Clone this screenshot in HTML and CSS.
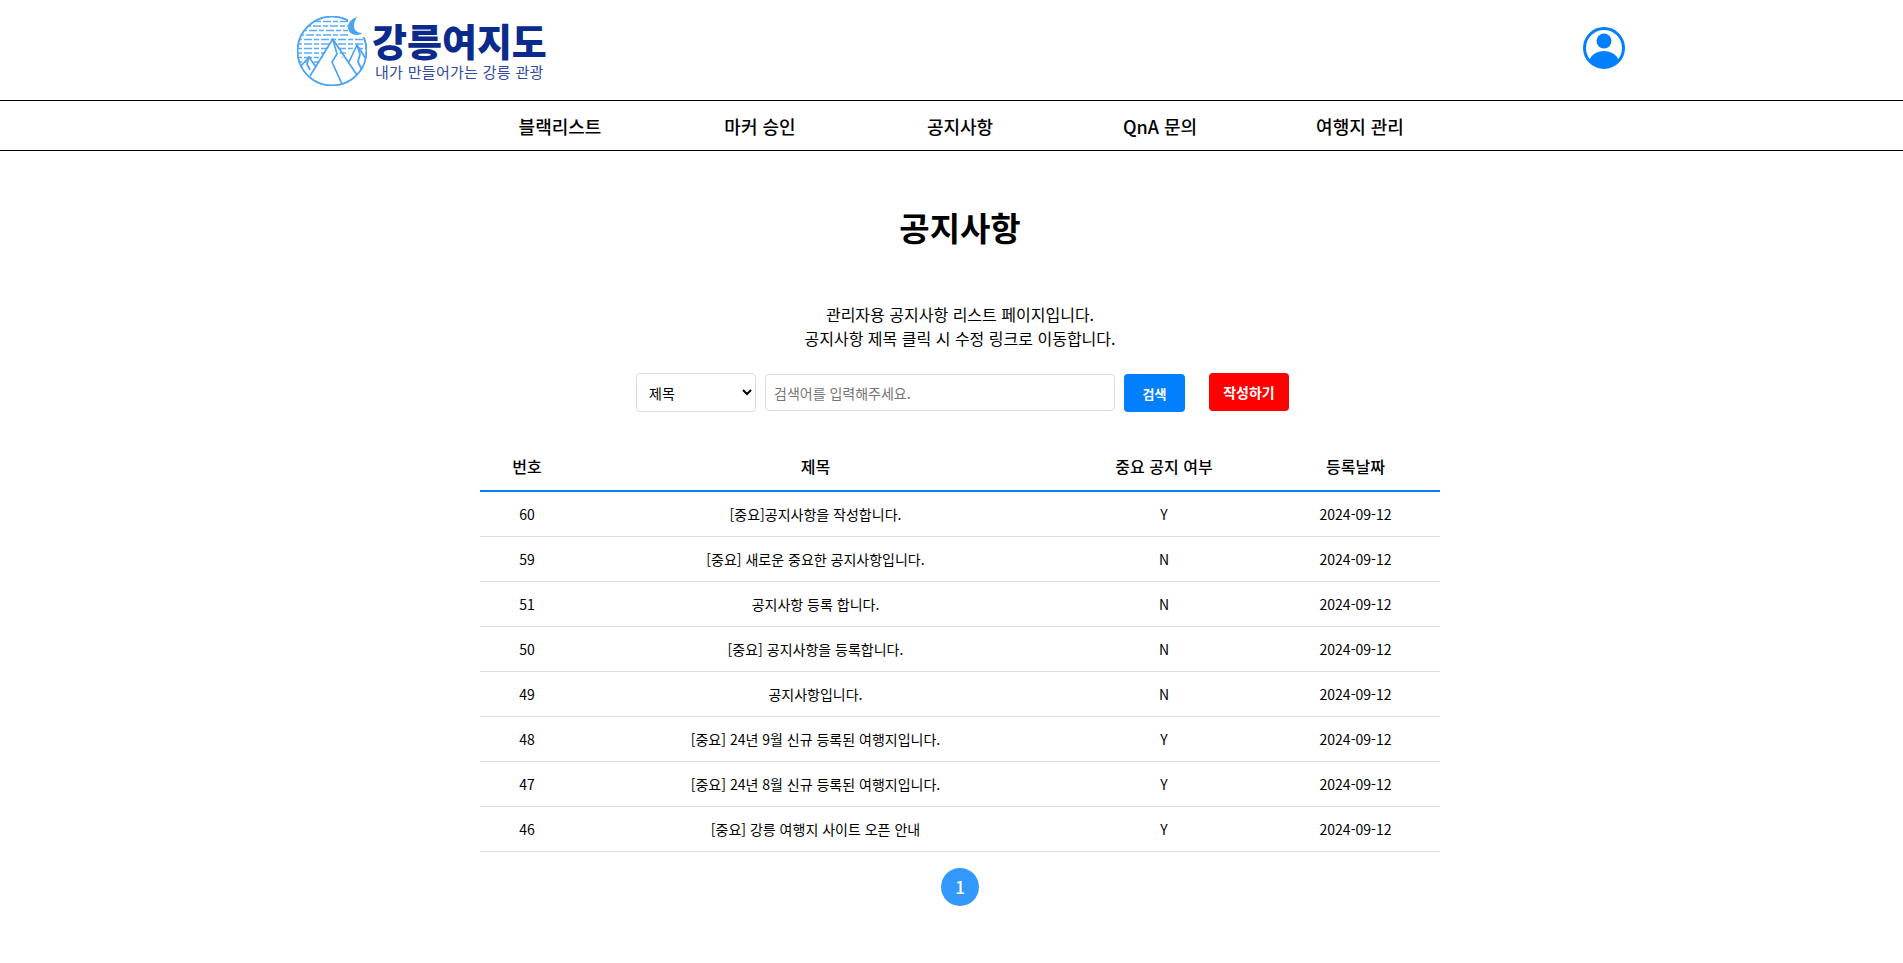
FILE: index.html
```html
<!DOCTYPE html>
<html lang="ko">
<head>
  <meta charset="UTF-8">
  <title>공지사항</title>
  <link rel="stylesheet" href="styles.css">
</head>
<body>
  <header class="top">
    <a class="logo" href="#">
      <svg class="logo-mark" width="70" height="70" viewBox="5 4 70 70" fill="none">
        <defs>
          <clipPath id="disc"><circle cx="40" cy="39" r="34"/></clipPath>
        </defs>
        <g clip-path="url(#disc)">
          <g stroke="#5aaef7" stroke-width="1.300" stroke-dasharray="5 2 8 2">
            <path d="M24 9.500H56M14 14H56M10 18.500H60M7 23H66M5 27.500H72M5 32H74M5 36.500H74M5 41H74M5 45.500H74M5 50H74"/>
          </g>
          <path d="M3 76 17 45 25 56 40.700 27 50 46 65 33 76 48V76z" fill="#fff"/>
        </g>
        <circle cx="40" cy="39" r="34.500" stroke="#4aa3f5" stroke-width="1.800"/>
        <path d="M56 3h16l2 22H56z" fill="#fff"/>
        <path d="M65 5c-6 2-9 6-9 10 0 5 4 8 9 8 2 0 4-1 5-2-5 0-8-3-8-7 0-3 1-6 3-9z" fill="#4aa3f5"/>
        <g stroke="#4aa3f5" stroke-width="1.700" stroke-linejoin="round">
          <path d="M18 64 40.700 27 65 63"/>
          <path d="M40.700 27 45 42 40 50 50 72"/>
          <path d="M57 50 65 33 74 47"/>
          <path d="M65 33 68 42 66 50 70 58"/>
          <path d="M9 54 17 45 24 55"/>
          <path d="M17 45 15 52 18 58"/>
        </g>
      </svg>
      <span class="logo-text">
        <strong>강릉여지도</strong>
        <small>내가 만들어가는 강릉 관광</small>
      </span>
    </a>
    <a class="user" href="#">
      <svg width="42" height="42" viewBox="0 0 42 42">
        <circle cx="21" cy="21" r="19.500" fill="#fff" stroke="#0080ff" stroke-width="3"/>
        <circle cx="21" cy="14" r="7.500" fill="#0080ff"/>
        <path d="M6.500 33c2-5.500 7.500-9 14.500-9s12.500 3.500 14.500 9c-3.500 4.500-8.500 7-14.500 7s-11-2.500-14.500-7z" fill="#0080ff"/>
      </svg>
    </a>
  </header>

  <nav class="menu">
    <a href="#">블랙리스트</a>
    <a href="#">마커 승인</a>
    <a href="#">공지사항</a>
    <a href="#">QnA 문의</a>
    <a href="#">여행지 관리</a>
  </nav>

  <main class="content">
    <h1>공지사항</h1>
    <p class="desc">관리자용 공지사항 리스트 페이지입니다.<br>공지사항 제목 클릭 시 수정 링크로 이동합니다.</p>

    <form class="search">
      <select>
        <option>제목</option>
      </select>
      <input type="text" placeholder="검색어를 입력해주세요.">
      <button type="button" class="btn-search">검색</button>
      <button type="button" class="btn-write">작성하기</button>
    </form>

    <table>
      <thead>
        <tr>
          <th class="c-no">번호</th>
          <th class="c-title">제목</th>
          <th class="c-yn">중요 공지 여부</th>
          <th class="c-date">등록날짜</th>
        </tr>
      </thead>
      <tbody>
        <tr><td>60</td><td>[중요]공지사항을 작성합니다.</td><td>Y</td><td>2024-09-12</td></tr>
        <tr><td>59</td><td>[중요] 새로운 중요한 공지사항입니다.</td><td>N</td><td>2024-09-12</td></tr>
        <tr><td>51</td><td>공지사항 등록 합니다.</td><td>N</td><td>2024-09-12</td></tr>
        <tr><td>50</td><td>[중요] 공지사항을 등록합니다.</td><td>N</td><td>2024-09-12</td></tr>
        <tr><td>49</td><td>공지사항입니다.</td><td>N</td><td>2024-09-12</td></tr>
        <tr><td>48</td><td>[중요] 24년 9월 신규 등록된 여행지입니다.</td><td>Y</td><td>2024-09-12</td></tr>
        <tr><td>47</td><td>[중요] 24년 8월 신규 등록된 여행지입니다.</td><td>Y</td><td>2024-09-12</td></tr>
        <tr><td>46</td><td>[중요] 강릉 여행지 사이트 오픈 안내</td><td>Y</td><td>2024-09-12</td></tr>
      </tbody>
    </table>

    <div class="paging"><a href="#">1</a></div>
  </main>
</body>
</html>
```

FILE: styles.css
```css
* {
  box-sizing: border-box;
}

body {
  margin: 0;
  font-family: "Noto Sans CJK KR", "Noto Sans", sans-serif;
  font-size: 14px;
  color: #000;
  background-color: #fff;
}

a {
  color: inherit;
  text-decoration: none;
}

.top {
  display: flex;
  justify-content: space-between;
  align-items: center;
  height: 100px;
  padding: 2px 278px 0 297px;
}

.logo {
  display: flex;
  align-items: center;
}

.logo-text {
  display: flex;
  flex-direction: column;
  margin-left: 5px;
}

.logo-text strong {
  font-size: 38px;
  line-height: 40px;
  font-weight: 900;
  color: #0a2a8c;
}

.logo-text small {
  margin: 2px 0 0 3px;
  font-size: 15px;
  line-height: 20px;
  letter-spacing: 0.3px;
  color: #2f4a9e;
}

.user {
  display: flex;
  margin-bottom: 6px;
}

.menu {
  display: flex;
  justify-content: center;
  height: 51px;
  padding-left: 17px;
  border-top: 1px solid #000;
  border-bottom: 1px solid #000;
}

.menu a {
  width: 200px;
  text-align: center;
  font-size: 18px;
  font-weight: 500;
  line-height: 50px;
}

.content {
  width: 960px;
  margin-left: 480px;
  text-align: center;
}

h1 {
  margin: 0;
  padding-top: 38px;
  font-size: 33px;
  line-height: 76px;
  font-weight: 700;
}

.desc {
  margin: 37px 0 0;
  font-size: 16px;
  line-height: 24px;
}

.search {
  display: flex;
  align-items: flex-start;
  margin: 23px 0 0 156px;
  height: 39px;
}

.search select {
  width: 120px;
  height: 39px;
  padding-left: 8px;
  border: 1px solid #ddd;
  border-radius: 4px;
  background-color: #fff;
  font-family: inherit;
  font-size: 14px;
}

.search input {
  width: 350px;
  height: 37px;
  margin: 1px 0 0 9px;
  padding: 0 8px;
  border: 1px solid #ddd;
  border-radius: 4px;
  font-family: inherit;
  font-size: 14px;
}

.search button {
  height: 38px;
  border: none;
  border-radius: 4px;
  color: #fff;
  font-family: inherit;
  font-size: 14px;
  font-weight: 700;
}

.search .btn-search {
  width: 61px;
  margin: 1px 0 0 9px;
  background-color: #0080ff;
  font-size: 13px;
}

.btn-write {
  width: 80px;
  margin-left: 24px;
  background-color: #f00;
}

table {
  width: 100%;
  margin-top: 31px;
  border-collapse: collapse;
  table-layout: fixed;
}

th {
  height: 48px;
  padding: 0 0 2px;
  font-size: 16px;
  font-weight: 500;
  border-bottom: 2px solid #0080ff;
}

td {
  height: 45px;
  padding: 0;
  border-bottom: 1px solid #ddd;
}

.c-no {
  width: 94px;
}

.c-title {
  width: 483px;
}

.c-yn {
  width: 214px;
}

.paging {
  display: flex;
  justify-content: center;
  margin-top: 16px;
}

.paging a {
  width: 38px;
  height: 38px;
  border-radius: 50%;
  background-color: #3399ff;
  color: #fff;
  font-size: 17px;
  font-weight: 500;
  line-height: 38px;
}
```
